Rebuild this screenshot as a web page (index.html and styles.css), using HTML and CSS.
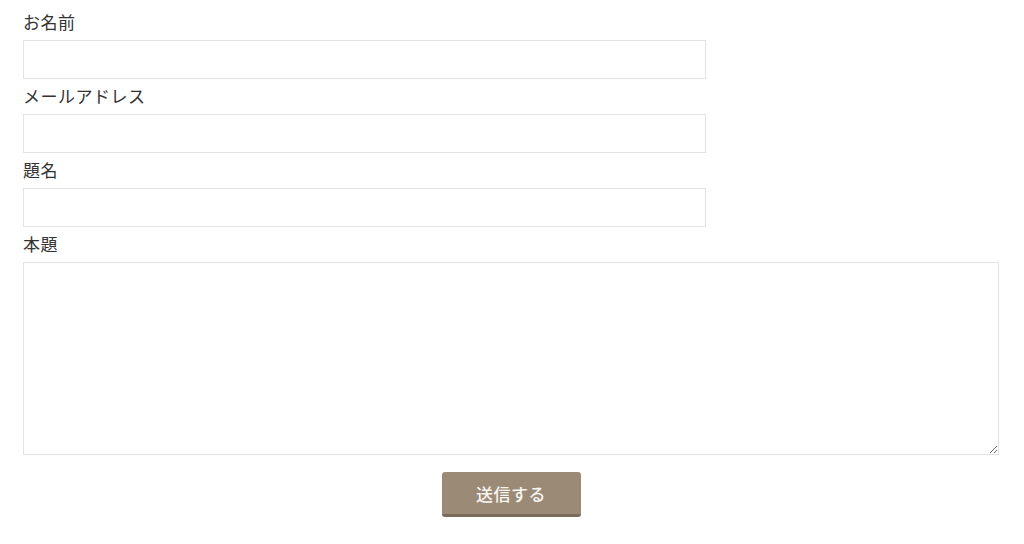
FILE: index.html
```html
<!DOCTYPE html>
<html lang="ja">
<head>
   <meta charset="UTF-8">
   <meta name="viewport" content="width=device-width, initial-scale=1.0">
   <title>お問い合わせ</title>
   <link rel="stylesheet" href="styles.css">
</head>
<body>
    <form class="contact-form">
        <!-- Fields -->
        <div class="field">
            <label for="name">お名前</label>
            <input type="text" id="name" class="short">
        </div>
        <div class="field">
            <label for="email">メールアドレス</label>
            <input type="email" id="email" class="short">
        </div>
        <div class="field">
            <label for="subject">題名</label>
            <input type="text" id="subject" class="short">
        </div>
        <div class="field">
            <label for="body">本題</label>
            <textarea id="body"></textarea>
        </div>

        <div class="actions">
            <button type="button">送信する</button>
        </div>
    </form>
</body>
</html>
```

FILE: styles.css
```css
* {
    box-sizing: border-box;
}

body {
    margin: 0;
    font-family: "Noto Sans CJK JP", "Noto Sans", sans-serif;
    color: #333;
    background-color: #ffffff;
}

.contact-form {
    width: 976px;
    margin-left: 23px;
    padding-top: 10px;
}

.field {
    margin-bottom: 5px;
}

.field label {
    display: block;
    font-size: 17px;
    letter-spacing: 0.5px;
    line-height: 24px;
    margin-bottom: 6px;
}

input, textarea {
    display: block;
    border: 1px solid #e3e3e3;
    background-color: #fff;
    font-family: inherit;
    font-size: 16px;
    padding: 6px 10px;
    margin: 0;
}

input.short {
    width: 683px;
    height: 39px;
}

textarea {
    width: 976px;
    height: 193px;
    resize: vertical;
}

.actions {
    display: flex;
    justify-content: center;
    padding-top: 12px;
}

.actions button {
    width: 139px;
    height: 45px;
    background-color: #9b8b76;
    color: #f7f5f2;
    border: none;
    border-bottom: 3px solid #7a6d5c;
    border-radius: 3px;
    font-family: inherit;
    font-size: 17px;
    letter-spacing: 0.5px;
    font-weight: 500;
    cursor: pointer;
}

.actions button:hover {
    background-color: #8d7e6a;
}
```
